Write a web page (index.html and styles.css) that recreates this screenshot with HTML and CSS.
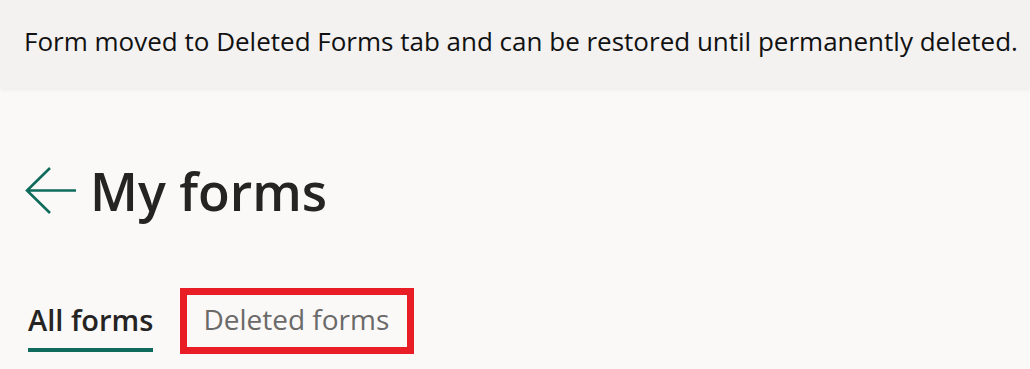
FILE: index.html
```html
<!DOCTYPE html>
<html lang="en">

<head>
    <meta charset="UTF-8">
    <title>My forms</title>
    <link rel="stylesheet" href="styles.css">
</head>

<body>

    <div class="banner">Form moved to Deleted Forms tab and can be restored until permanently deleted.</div>

    <div class="page">
        <div class="title-row">
            <svg class="back" width="54" height="48" viewBox="0 0 54 48">
                <path d="M51 23.5 H3 M25 1 L2 23.5 L25 46" fill="none" stroke="#0f6b5b" stroke-width="2.6" />
            </svg>
            <h1 class="title">My forms</h1>
        </div>

        <div class="tabs">
            <div class="tab active">All forms</div>
            <div class="tab deleted">Deleted forms</div>
        </div>
    </div>

</body>

</html>
```

FILE: styles.css
```css
body {
    font-family: "Open Sans", "Noto Sans", sans-serif;
    background-color: #faf9f8;
    margin: 0;
    padding: 0;
    color: #201f1e;
}

.banner {
    height: 88px;
    box-sizing: border-box;
    padding-bottom: 6px;
    background-color: #f3f2f1;
    box-shadow: 0 2px 4px rgba(0, 0, 0, 0.05);
    padding-left: 24px;
    display: flex;
    align-items: center;
    font-size: 26px;
    color: #111;
}

.page {
    padding: 0 0 0 25px;
}

.title-row {
    display: flex;
    align-items: center;
    margin-top: 71px;
    gap: 11px;
}

.back {
    display: block;
}

.title {
    margin: 0;
    font-size: 52px;
    font-weight: 600;
    line-height: 64px;
    color: #252423;
}

.tabs {
    display: flex;
    align-items: flex-end;
    margin-top: 65px;
}

.tab {
    font-size: 29px;
    line-height: 40px;
}

.tab.active {
    margin-left: 3px;
    margin-bottom: 2px;
    font-weight: 600;
    color: #252423;
    border-bottom: 4px solid #0f6b5b;
    padding-bottom: 8px;
}

.tab.deleted {
    margin-left: 27px;
    font-size: 28px;
    color: #6b6a69;
    border: 7px solid #e91d25;
    padding: 4px 18px 8px 16px;
}
```
